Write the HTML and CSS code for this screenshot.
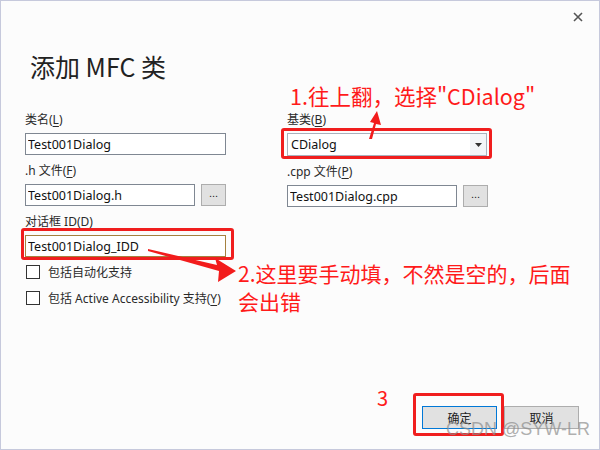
FILE: index.html
```html
<!DOCTYPE html>
<html lang="zh-CN">
<head>
    <meta charset="UTF-8">
    <meta name="viewport" content="width=device-width, initial-scale=1.0">
    <title>添加 MFC 类</title>
    <link rel="stylesheet" href="styles.css">
</head>
<body>
    <div class="dialog">
        <svg class="close" width="10" height="10" viewBox="0 0 10 10">
            <path d="M1 1 L9 9 M9 1 L1 9" stroke="#555" stroke-width="1.6"/>
        </svg>

        <h1 class="title">添加 MFC 类</h1>

        <div class="form">
            <div class="col col-left">
                <div class="field">
                    <label>类名(<u>L</u>)</label>
                    <div class="row">
                        <input class="text wide" type="text" value="Test001Dialog">
                    </div>
                </div>
                <div class="field">
                    <label>.h 文件(<u>F</u>)</label>
                    <div class="row">
                        <input class="text file" type="text" value="Test001Dialog.h">
                        <button class="browse">...</button>
                    </div>
                </div>
                <div class="field">
                    <label>对话框 ID(<u>D</u>)</label>
                    <div class="row">
                        <input class="text wide focus" type="text" value="Test001Dialog_IDD">
                    </div>
                </div>
                <div class="checks">
                    <div class="check"><span class="box"></span>包括自动化支持</div>
                    <div class="check"><span class="box"></span>包括 Active Accessibility 支持(<u>Y</u>)</div>
                </div>
            </div>

            <div class="col col-right">
                <div class="field">
                    <label>基类(<u>B</u>)</label>
                    <div class="row">
                        <div class="combo">
                            <span class="combo-value">CDialog</span>
                            <span class="combo-arrow">
                                <svg width="7" height="4" viewBox="0 0 7 4"><path d="M0 0 H7 L3.5 4 Z" fill="#333"/></svg>
                            </span>
                        </div>
                    </div>
                </div>
                <div class="field">
                    <label>.cpp 文件(<u>P</u>)</label>
                    <div class="row">
                        <input class="text file" type="text" value="Test001Dialog.cpp">
                        <button class="browse">...</button>
                    </div>
                </div>
            </div>
        </div>

        <div class="footer">
            <button class="btn default">确定</button>
            <button class="btn">取消</button>
        </div>

        <!-- annotations drawn over the dialog -->
        <div class="mark mark-base"></div>
        <div class="mark mark-id"></div>
        <div class="mark mark-ok"></div>

        <div class="note note-1">1.往上翻，选择"CDialog"</div>
        <div class="note note-2">2.这里要手动填，不然是空的，后面<br>会出错</div>
        <div class="note note-3">3</div>

        <svg class="arrows" width="600" height="450" viewBox="0 0 600 450">
            <polygon points="369,139 372,139 376,124 381,125 377,111 370,122 374,123" fill="#f21c1c"/>
            <polygon points="148,249 148,251 219,271 218,282 236,271 215,258 217,265" fill="#f21c1c"/>
        </svg>

        <div class="watermark">CSDN @SYW-LR</div>
    </div>
</body>
</html>
```

FILE: styles.css
```css
body {
    margin: 0;
    background: #fcfcfc;
    font-family: "Noto Sans", "Noto Sans CJK SC", sans-serif;
    color: #1e1e1e;
}
.dialog {
    position: relative;
    width: 600px;
    height: 450px;
    box-sizing: border-box;
    border: 1px solid #c6c9dc;
    background: #fcfcfc;
    padding: 0 20px 20px 24px;
    display: flex;
    flex-direction: column;
}
.close {
    position: absolute;
    top: 11px;
    right: 16px;
}
.title {
    margin: 47px 0 0 5px;
    font-family: "Noto Sans CJK SC", sans-serif;
    font-weight: normal;
    font-size: 25px;
    line-height: 36px;
    color: #222;
}
.form {
    display: flex;
    margin-top: 25px;
}
.col-left {
    width: 262px;
}
.field label {
    display: block;
    font-size: 12px;
    line-height: 21px;
    margin-bottom: 3px;
    color: #2a2a2a;
}
.field u {
    text-decoration-thickness: 1px;
    text-underline-offset: 2px;
}
.row {
    display: flex;
    gap: 6px;
    margin-bottom: 5px;
}
.text {
    box-sizing: border-box;
    height: 22px;
    margin: 0;
    padding: 0 2px;
    border: 1px solid #7f8792;
    background: #fff;
    font-family: "Noto Sans", sans-serif;
    font-size: 12.5px;
    color: #111;
}
.wide {
    width: 201px;
}
.file {
    width: 170px;
}
.focus {
    border-color: #a5813f;
}
.browse {
    box-sizing: border-box;
    width: 25px;
    height: 22px;
    padding: 0 0 4px;
    border: 1px solid #adadad;
    background: #e1e1e1;
    font-size: 11px;
    color: #222;
}
.combo {
    box-sizing: border-box;
    width: 200px;
    height: 23px;
    display: flex;
    border: 1px solid #a9b1bd;
    background: #fff;
    font-size: 12.5px;
    color: #111;
}
.combo-value {
    flex: 1;
    padding-left: 3px;
    line-height: 21px;
}
.combo-arrow {
    width: 16px;
    background: #f3f5f8;
    display: flex;
    align-items: center;
    justify-content: center;
}
.checks {
    margin-top: 4px;
    display: flex;
    flex-direction: column;
    gap: 6px;
}
.check {
    display: flex;
    align-items: center;
    height: 20px;
    font-size: 12px;
    color: #2a2a2a;
}
.box {
    box-sizing: border-box;
    width: 14px;
    height: 14px;
    border: 1px solid #333;
    background: #fff;
    margin: 0 8px 0 1px;
}
.check u {
    text-decoration-thickness: 1px;
    text-underline-offset: 2px;
}
.footer {
    margin-top: auto;
    display: flex;
    justify-content: flex-end;
    gap: 7px;
}
.btn {
    box-sizing: border-box;
    width: 75px;
    height: 23px;
    border: 1px solid #adadad;
    background: #e1e1e1;
    font-family: "Noto Sans CJK SC", sans-serif;
    font-size: 12px;
    color: #1e1e1e;
}
.btn.default {
    border-color: #0078d7;
}
.mark {
    position: absolute;
    border: 3px solid #f01e1e;
    border-radius: 3px;
}
.mark-base {
    left: 280px;
    top: 127px;
    width: 205px;
    height: 25px;
}
.mark-id {
    left: 20px;
    top: 227px;
    width: 207px;
    height: 26px;
}
.mark-ok {
    left: 412px;
    top: 392px;
    width: 85px;
    height: 37px;
}
.note {
    position: absolute;
    color: #ff1a1a;
    font-family: "Noto Sans CJK SC", sans-serif;
}
.note-1 {
    left: 289px;
    top: 80px;
    font-size: 21.5px;
    line-height: 30px;
}
.note-2 {
    left: 237px;
    top: 258px;
    font-size: 21px;
    line-height: 28px;
}
.note-3 {
    left: 376px;
    top: 383px;
    font-size: 20px;
    line-height: 28px;
}
.arrows {
    position: absolute;
    left: -1px;
    top: -1px;
}
.watermark {
    position: absolute;
    left: 445px;
    top: 418px;
    font-family: "Liberation Sans", sans-serif;
    font-size: 18px;
    color: rgba(140, 140, 140, 0.7);
}
```
